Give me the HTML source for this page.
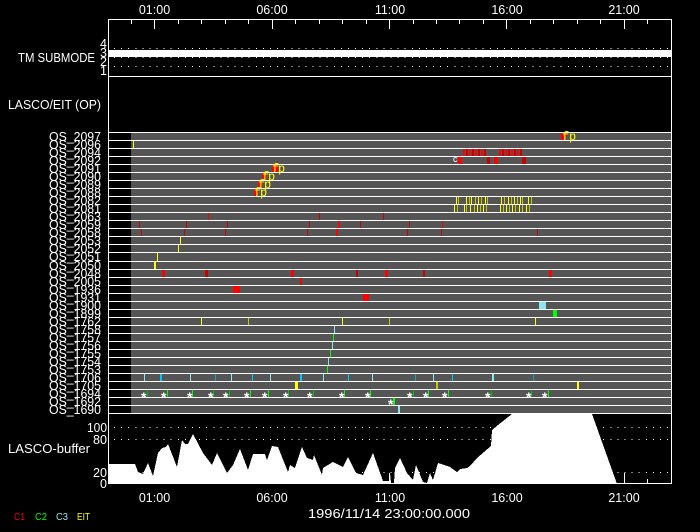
<!DOCTYPE html>
<html><head><meta charset="utf-8"><style>
html,body{margin:0;padding:0;background:#000;width:700px;height:532px;overflow:hidden}
svg{display:block}
text{font-family:"Liberation Sans",sans-serif;font-size:12.5px;fill:#fff}
.l{font-size:12.5px}
.t{text-anchor:middle}
.fp{font-family:"Liberation Mono",monospace;font-size:12px;fill:#ff0}
.a{font-size:14px;font-weight:bold}
.s{shape-rendering:crispEdges;fill:none;stroke-width:1}
</style></head><body>
<svg width="700" height="532" viewBox="0 0 700 532" xmlns="http://www.w3.org/2000/svg">
<rect width="700" height="532" fill="#000"/>
<rect x="131" y="132" width="540" height="282" fill="#555" shape-rendering="crispEdges"/>

<!-- top ticks -->
<path class="s" stroke="#fff" d="M131.5 20v4M154.5 20v9M178.5 20v4M201.5 20v4M225.5 20v4M248.5 20v4M272.5 20v9M295.5 20v4M319.5 20v4M342.5 20v4M366.5 20v4M389.5 20v9M413.5 20v4M436.5 20v4M459.5 20v4M483.5 20v4M506.5 20v9M530.5 20v4M553.5 20v4M577.5 20v4M600.5 20v4M624.5 20v9M647.5 20v4"/>

<!-- dotted lines -->
<g stroke="#fff" stroke-dasharray="1 6.09" fill="none" shape-rendering="crispEdges">
<path d="M114 48.5H671M114 57.5H671M114 66.5H671M114 427.5H671M114 439.5H671M114 472.5H671"/>
</g>
<rect x="108" y="50" width="563" height="7" fill="#fff" shape-rendering="crispEdges"/>

<!-- row lines -->
<path class="s" stroke="#fff" d="M108 132.5H671M108 140.5H671M108 148.5H671M108 156.5H671M108 164.5H671M108 172.5H671M108 180.5H671M108 188.5H671M108 196.5H671M108 204.5H671M108 212.5H671M108 220.5H671M108 228.5H671M108 236.5H671M108 244.5H671M108 252.5H671M108 261.5H671M108 269.5H671M108 277.5H671M108 285.5H671M108 293.5H671M108 301.5H671M108 309.5H671M108 317.5H671M108 325.5H671M108 333.5H671M108 341.5H671M108 349.5H671M108 357.5H671M108 365.5H671M108 373.5H671M108 381.5H671M108 389.5H671M108 397.5H671M108 405.5H671M108 413.5H671M108 76.5H671"/>

<!-- marks: red -->
<path class="s" stroke="#f00" d="M208.5 213v7M339.5 221v7M338.5 221v7M337.5 229v7M336.5 229v7M442.5 221v7"/>
<path class="s" stroke="#c80000" d="M139.5 221v7M186.5 221v7M227.5 221v7M309.5 221v7M360.5 221v7M409.5 221v7M141.5 229v7M184.5 229v7M225.5 229v7M307.5 229v7M407.5 229v7M441.5 229v7M537.5 229v7M319.5 213v7M383.5 213v7"/>
<path class="s" style="stroke-width:2" stroke="#f00" d="M464 149v7M470 149v7M476 149v7M482 149v7M500 149v7M506 149v7M512 149v7M518 149v7"/>
<path class="s" style="stroke-width:2" stroke="#c80000" d="M467 149v7M473 149v7M479 149v7M485 149v7M503 149v7M509 149v7M515 149v7M521 149v7"/>
<g fill="#f00" shape-rendering="crispEdges">
<rect x="458" y="157" width="4" height="7"/><rect x="494" y="157" width="4" height="7"/>
<rect x="162" y="270" width="3" height="7"/><rect x="291" y="270" width="3" height="7"/><rect x="385" y="270" width="3" height="7"/><rect x="549" y="270" width="3" height="7"/>
<rect x="300" y="278" width="2" height="7"/>
<rect x="233" y="286" width="7" height="7"/><rect x="363" y="294" width="6" height="7"/>
<rect x="272" y="165" width="6" height="7"/><rect x="262" y="173" width="4" height="7"/><rect x="258" y="181" width="4" height="7"/><rect x="254" y="189" width="4" height="7"/>
<rect x="561" y="133" width="3" height="7"/><rect x="565" y="133" width="2" height="3"/>
</g>
<g fill="#c80000" shape-rendering="crispEdges">
<rect x="487" y="157" width="3" height="7"/><rect x="522" y="157" width="4" height="7"/>
<rect x="205" y="270" width="3" height="7"/><rect x="356" y="270" width="2" height="7"/><rect x="423" y="270" width="2" height="7"/>
</g>

<!-- marks: yellow -->
<path class="s" stroke="#ff0" d="M133.5 141v7M180.5 237v7M178.5 245v7M157.5 253v8M201.5 318v7M342.5 318v7M535.5 318v7M456.5 197v7M466.5 197v7M471.5 197v7M478.5 197v7M485.5 197v7M501.5 197v7M508.5 197v7M514.5 197v7M520.5 197v7M528.5 197v7M454.5 205v7M464.5 205v7M470.5 205v7M477.5 205v7M483.5 205v7M500.5 205v7M506.5 205v7M512.5 205v7M519.5 205v7M526.5 205v7"/>
<path class="s" stroke="#c8c800" d="M248.5 318v7M389.5 318v7M458.5 197v7M469.5 197v7M475.5 197v7M481.5 197v7M487.5 197v7M504.5 197v7M511.5 197v7M517.5 197v7M522.5 197v7M531.5 197v7M457.5 205v7M466.5 205v7M474.5 205v7M480.5 205v7M486.5 205v7M503.5 205v7M509.5 205v7M515.5 205v7M522.5 205v7M529.5 205v7"/>
<g shape-rendering="crispEdges">
<rect x="154" y="262" width="2" height="7" fill="#ff0"/>
<rect x="295" y="382" width="3" height="7" fill="#ff0"/>
<rect x="436" y="382" width="2" height="7" fill="#c8c800"/>
<rect x="577" y="382" width="2" height="7" fill="#ff0"/>
<rect x="539" y="302" width="7" height="7" fill="#8ee5ee"/>
<rect x="553" y="310" width="4" height="7" fill="#0f0"/>
<rect x="160" y="374" width="2" height="7" fill="#00c8ff"/>
<rect x="300" y="374" width="2" height="7" fill="#00c8ff"/>
<rect x="492" y="374" width="2" height="7" fill="#8ee5ee"/>
<rect x="393" y="398" width="2" height="7" fill="#0f0"/>
<rect x="398" y="406" width="2" height="7" fill="#8ee5ee"/>
</g>

<!-- marks: cyan -->
<path class="s" stroke="#8ee5ee" d="M334.5 326v7M332.5 342v7M328.5 358v7M144.5 374v7M190.5 374v7M231.5 374v7M270.5 374v7M323.5 374v7M372.5 374v7M433.5 374v7"/>
<path class="s" stroke="#00c8ff" d="M252.5 374v7M348.5 374v7M452.5 374v7"/>
<path class="s" stroke="#20a0b0" d="M215.5 374v7M415.5 374v7M533.5 374v7"/>
<path class="s" stroke="#0f0" d="M333.5 334v7M330.5 350v7M327.5 366v7M167.5 390v7M192.5 390v7M250.5 390v7M268.5 390v7M344.5 390v7M370.5 390v7M428.5 390v7M448.5 390v7M548.5 390v7"/>
<path class="s" stroke="#00c800" d="M147.5 390v7M213.5 390v7M229.5 390v7M288.5 390v7M313.5 390v7M413.5 390v7M491.5 390v7M531.5 390v7"/>

<!-- asterisks -->
<g>
<text class="a" x="141" y="402">*</text><text class="a" x="161" y="402">*</text><text class="a" x="187" y="402">*</text><text class="a" x="208" y="402">*</text><text class="a" x="223" y="402">*</text><text class="a" x="244" y="402">*</text><text class="a" x="262" y="402">*</text><text class="a" x="283" y="402">*</text><text class="a" x="307" y="402">*</text><text class="a" x="339" y="402">*</text><text class="a" x="365" y="402">*</text><text class="a" x="407" y="402">*</text><text class="a" x="423" y="402">*</text><text class="a" x="442" y="402">*</text><text class="a" x="485" y="402">*</text><text class="a" x="526" y="402">*</text><text class="a" x="542" y="402">*</text><text class="a" x="388" y="409">*</text>
</g>
<text x="453" y="162" style="font-size:9px">c</text>

<!-- fp -->
<text class="fp" x="272 278" y="172">fp</text>
<text class="fp" x="262 268" y="180">fp</text>
<text class="fp" x="258 264" y="188">fp</text>
<text class="fp" x="254 260" y="196">fp</text>
<text class="fp" x="562 569" y="140">fp</text>

<!-- bottom ticks and red -->
<path class="s" stroke="#fff" d="M131.5 479v4M154.5 473v10M178.5 479v4M201.5 479v4M225.5 479v4M248.5 479v4M272.5 473v10M295.5 479v4M319.5 479v4M342.5 479v4M366.5 479v4M389.5 473v10M413.5 479v4M436.5 479v4M459.5 479v4M483.5 479v4M506.5 473v10M530.5 479v4M553.5 479v4M577.5 479v4M600.5 479v4M624.5 473v10M647.5 479v4"/>

<!-- buffer curve -->
<polygon fill="#fff" shape-rendering="crispEdges" points="108,484 108,464 135,464 138,472 143,474 148,463 153,476 158,453 162,448 166,447 168,444 177,467 182,440 185,444 188,444 193,434 203,453 212,465 217,453 222,463 227,473 233,465 240,449 248,470 253,454 265,454 267,460 272,446 278,447 288,472 290,465 295,468 302,447 307,458 313,460 314,455 322,475 323,468 333,462 343,467 348,457 356,473 363,475 373,453 383,481 389,481 390,473 391,483 394,483 395,468 400,458 407,473 413,480 416,465 423,482 427,483 430,473 433,480 438,463 450,467 457,472 460,469 467,468 470,466 477,458 491,446 492,430 498,425 512,414 592,414 617,484"/>
<path class="s" stroke="#f00" d="M616 483.5H671M391 483.5h2M423 483.5h1M427 483.5h2"/>

<!-- frame -->
<rect x="108.5" y="19.5" width="563" height="464" fill="none" stroke="#fff" shape-rendering="crispEdges"/>

<!-- labels -->
<text class="t" x="154.5" y="14">01:00</text><text class="t" x="272" y="14">06:00</text><text class="t" x="390" y="14">11:00</text><text class="t" x="507" y="14">16:00</text><text class="t" x="624" y="14">21:00</text>
<text class="t" x="154.5" y="502">01:00</text><text class="t" x="272" y="502">06:00</text><text class="t" x="390" y="502">11:00</text><text class="t" x="507" y="502">16:00</text><text class="t" x="624" y="502">21:00</text>
<text x="308" y="518" textLength="162" lengthAdjust="spacingAndGlyphs">1996/11/14 23:00:00.000</text>
<text x="18" y="62" textLength="77" lengthAdjust="spacingAndGlyphs">TM SUBMODE</text>
<text x="8" y="109" textLength="93" lengthAdjust="spacingAndGlyphs">LASCO/EIT (OP)</text>
<text x="8" y="453" textLength="82" lengthAdjust="spacingAndGlyphs">LASCO-buffer</text>
<text x="100" y="48">4</text><text x="100" y="57">3</text><text x="100" y="66">2</text><text x="100" y="75">1</text>
<text x="87" y="432" textLength="20" lengthAdjust="spacingAndGlyphs">100</text>
<text x="93" y="444" textLength="14" lengthAdjust="spacingAndGlyphs">80</text>
<text x="93" y="477" textLength="14" lengthAdjust="spacingAndGlyphs">20</text>
<text x="100" y="488">0</text>
<text x="14" y="520" style="font-size:10px;fill:#f00" textLength="11" lengthAdjust="spacingAndGlyphs">C1</text>
<text x="35" y="520" style="font-size:10px;fill:#0f0" textLength="12" lengthAdjust="spacingAndGlyphs">C2</text>
<text x="56" y="520" style="font-size:10px;fill:#8ee5ee" textLength="12" lengthAdjust="spacingAndGlyphs">C3</text>
<text x="77" y="520" style="font-size:10px;fill:#ff0" textLength="13" lengthAdjust="spacingAndGlyphs">EIT</text>

<g>
<text x="49" y="141" textLength="52" lengthAdjust="spacingAndGlyphs">OS_2097</text>
<text x="49" y="149" textLength="52" lengthAdjust="spacingAndGlyphs">OS_2096</text>
<text x="49" y="157" textLength="52" lengthAdjust="spacingAndGlyphs">OS_2094</text>
<text x="49" y="165" textLength="52" lengthAdjust="spacingAndGlyphs">OS_2092</text>
<text x="49" y="173" textLength="52" lengthAdjust="spacingAndGlyphs">OS_2091</text>
<text x="49" y="181" textLength="52" lengthAdjust="spacingAndGlyphs">OS_2090</text>
<text x="49" y="189" textLength="52" lengthAdjust="spacingAndGlyphs">OS_2089</text>
<text x="49" y="197" textLength="52" lengthAdjust="spacingAndGlyphs">OS_2088</text>
<text x="49" y="205" textLength="52" lengthAdjust="spacingAndGlyphs">OS_2082</text>
<text x="49" y="213" textLength="52" lengthAdjust="spacingAndGlyphs">OS_2081</text>
<text x="49" y="221" textLength="52" lengthAdjust="spacingAndGlyphs">OS_2063</text>
<text x="49" y="229" textLength="52" lengthAdjust="spacingAndGlyphs">OS_2059</text>
<text x="49" y="237" textLength="52" lengthAdjust="spacingAndGlyphs">OS_2058</text>
<text x="49" y="245" textLength="52" lengthAdjust="spacingAndGlyphs">OS_2053</text>
<text x="49" y="253" textLength="52" lengthAdjust="spacingAndGlyphs">OS_2052</text>
<text x="49" y="261" textLength="52" lengthAdjust="spacingAndGlyphs">OS_2051</text>
<text x="49" y="270" textLength="52" lengthAdjust="spacingAndGlyphs">OS_2050</text>
<text x="49" y="278" textLength="52" lengthAdjust="spacingAndGlyphs">OS_2048</text>
<text x="49" y="286" textLength="52" lengthAdjust="spacingAndGlyphs">OS_2005</text>
<text x="49" y="294" textLength="52" lengthAdjust="spacingAndGlyphs">OS_1936</text>
<text x="49" y="302" textLength="52" lengthAdjust="spacingAndGlyphs">OS_1931</text>
<text x="49" y="310" textLength="52" lengthAdjust="spacingAndGlyphs">OS_1900</text>
<text x="49" y="318" textLength="52" lengthAdjust="spacingAndGlyphs">OS_1899</text>
<text x="49" y="326" textLength="52" lengthAdjust="spacingAndGlyphs">OS_1762</text>
<text x="49" y="334" textLength="52" lengthAdjust="spacingAndGlyphs">OS_1758</text>
<text x="49" y="342" textLength="52" lengthAdjust="spacingAndGlyphs">OS_1757</text>
<text x="49" y="350" textLength="52" lengthAdjust="spacingAndGlyphs">OS_1756</text>
<text x="49" y="358" textLength="52" lengthAdjust="spacingAndGlyphs">OS_1755</text>
<text x="49" y="366" textLength="52" lengthAdjust="spacingAndGlyphs">OS_1754</text>
<text x="49" y="374" textLength="52" lengthAdjust="spacingAndGlyphs">OS_1753</text>
<text x="49" y="382" textLength="52" lengthAdjust="spacingAndGlyphs">OS_1706</text>
<text x="49" y="390" textLength="52" lengthAdjust="spacingAndGlyphs">OS_1705</text>
<text x="49" y="398" textLength="52" lengthAdjust="spacingAndGlyphs">OS_1694</text>
<text x="49" y="406" textLength="52" lengthAdjust="spacingAndGlyphs">OS_1692</text>
<text x="49" y="414" textLength="52" lengthAdjust="spacingAndGlyphs">OS_1690</text>
</g>
</svg>
</body></html>
